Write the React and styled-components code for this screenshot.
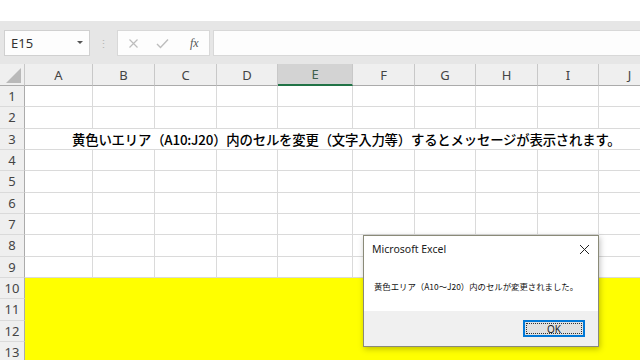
import React from 'react';
import styled, { createGlobalStyle } from 'styled-components';

const GlobalStyle = createGlobalStyle`
  html, body {
    margin: 0;
    padding: 0;
    background: #ffffff;
    overflow: hidden;
  }
  body {
    font-family: "Noto Sans", "Noto Sans CJK JP", sans-serif;
  }
`;

const COLS = [
  { name: 'A', width: 68 },
  { name: 'B', width: 62 },
  { name: 'C', width: 62 },
  { name: 'D', width: 61 },
  { name: 'E', width: 75 },
  { name: 'F', width: 62 },
  { name: 'G', width: 61 },
  { name: 'H', width: 62 },
  { name: 'I', width: 61 },
  { name: 'J', width: 62 },
];

const ROWS = [1, 2, 3, 4, 5, 6, 7, 8, 9, 10, 11, 12, 13];

const Window = styled.div`
  position: relative;
  width: 640px;
  height: 360px;
  overflow: hidden;
  display: flex;
  flex-direction: column;
`;

const TopStrip = styled.div`
  height: 21px;
  background: #ffffff;
  flex-shrink: 0;
`;

const FormulaBar = styled.div`
  height: 26px;
  padding: 9px 0 8px 4px;
  background: #e6e6e6;
  display: flex;
  align-items: stretch;
  flex-shrink: 0;
`;

const NameBox = styled.div`
  width: 86px;
  box-sizing: border-box;
  background: #fdfdfd;
  border: 1px solid #d0d0d0;
  display: flex;
  align-items: center;
  justify-content: space-between;
  padding: 0 6px 0 6px;
  font-size: 13px;
  color: #333;
`;

const DropArrow = styled.span`
  width: 0;
  height: 0;
  border-left: 3px solid transparent;
  border-right: 3px solid transparent;
  border-top: 3px solid #555;
  margin-top: -2px;
`;

const Grip = styled.div`
  width: 27px;
  display: flex;
  align-items: center;
  justify-content: center;
  color: #b5b5b5;
  font-size: 11px;
`;

const FuncBox = styled.div`
  width: 93px;
  box-sizing: border-box;
  background: #fdfdfd;
  border: 1px solid #d8d8d8;
  display: flex;
  align-items: center;
  padding-left: 10px;
  gap: 17px;
`;

const FxLabel = styled.span`
  font-family: "Liberation Serif", serif;
  font-style: italic;
  font-size: 12px;
  color: #555;
  margin-left: 4px;
`;

const FormulaInput = styled.div`
  flex: 1;
  margin-left: 3px;
  background: #fdfdfd;
  border: 1px solid #d8d8d8;
  border-right: none;
`;

const Sheet = styled.div`
  display: grid;
  grid-template-columns: 25px ${COLS.map((c) => `${c.width}px`).join(' ')};
  grid-template-rows: 22px repeat(${ROWS.length}, 21.33px);
  background: #ffffff;
  flex-shrink: 0;
`;

const Corner = styled.div`
  background: #efefef;
  border-right: 1px solid #c8c8c8;
  border-bottom: 1px solid #ababab;
  position: relative;
`;

const ColHeader = styled.div`
  background: ${(p) => (p.$active ? '#d3d3d3' : '#efefef')};
  border-right: 1px solid #c8c8c8;
  border-bottom: ${(p) => (p.$active ? '2px solid #217346' : '1px solid #ababab')};
  display: flex;
  align-items: center;
  justify-content: center;
  font-size: 13px;
  color: ${(p) => (p.$active ? '#3f5e4c' : '#444')};
  box-sizing: border-box;
`;

const RowHeader = styled.div`
  background: #efefef;
  border-right: 1px solid #ababab;
  border-bottom: 1px solid #dadada;
  display: flex;
  align-items: center;
  justify-content: center;
  font-size: 13px;
  color: #444;
  box-sizing: border-box;
`;

const Cell = styled.div`
  background: ${(p) => (p.$fill ? '#ffff00' : '#ffffff')};
  border-right: 1px solid ${(p) => (p.$fill ? '#ffff00' : '#dadada')};
  border-bottom: 1px solid ${(p) => (p.$fill ? '#ffff00' : '#dadada')};
  box-sizing: border-box;
`;

const MergedCell = styled.div`
  grid-column: 2 / -1;
  background: #ffffff;
  border-bottom: 1px solid #dadada;
  box-sizing: border-box;
  display: flex;
  align-items: center;
  padding-left: 47px;
  font-family: "Noto Sans CJK JP", sans-serif;
  font-size: 13.4px;
  font-weight: 500;
  color: #000;
  white-space: nowrap;
  letter-spacing: -0.2px;
`;

const Dialog = styled.div`
  position: absolute;
  left: 363px;
  top: 235px;
  width: 236px;
  height: 112px;
  box-sizing: border-box;
  background: #ffffff;
  border: 1px solid #8a8a78;
  box-shadow: 1px 2px 6px rgba(0, 0, 0, 0.25);
  display: flex;
  flex-direction: column;
`;

const TitleBar = styled.div`
  height: 26px;
  display: flex;
  align-items: center;
  justify-content: space-between;
  padding: 0 8px 0 8px;
  font-size: 10.5px;
  color: #222;
`;

const Message = styled.div`
  flex: 1;
  display: flex;
  align-items: center;
  padding-left: 10px;
  padding-bottom: 2px;
  font-family: "Noto Sans CJK JP", sans-serif;
  font-size: 8.4px;
  color: #111;
  white-space: nowrap;
`;

const Footer = styled.div`
  height: 35px;
  background: #f0f0f0;
  display: flex;
  align-items: center;
  justify-content: flex-end;
  padding-right: 13px;
`;

const OkButton = styled.div`
  width: 62px;
  height: 17px;
  box-sizing: border-box;
  background: #e1e1e1;
  border: 2px solid #0078d7;
  display: flex;
  align-items: center;
  justify-content: center;
  font-size: 10px;
  color: #222;
  position: relative;
  &::after {
    content: '';
    position: absolute;
    inset: 1px;
    border: 1px dotted #333;
  }
`;

const CloseIcon = () => (
  <svg width="11" height="11" viewBox="0 0 11 11">
    <path d="M1 1L10 10M10 1L1 10" stroke="#222" strokeWidth="1" fill="none" />
  </svg>
);

const CrossIcon = () => (
  <svg width="11" height="11" viewBox="0 0 11 11">
    <path d="M1.5 1.5L9.5 9.5M9.5 1.5L1.5 9.5" stroke="#bdbdbd" strokeWidth="1.2" fill="none" />
  </svg>
);

const CheckIcon = () => (
  <svg width="13" height="11" viewBox="0 0 13 11">
    <path d="M1 6L4.5 9.5L12 1.5" stroke="#bdbdbd" strokeWidth="1.4" fill="none" />
  </svg>
);

const SelectAll = () => (
  <svg width="25" height="22" viewBox="0 0 25 22" style={{ position: 'absolute', left: 0, top: 0 }}>
    <polygon points="21,4 21,19 6,19" fill="#b9b9b9" />
  </svg>
);

const App = () => {
  return (
    <Window>
      <GlobalStyle />
      <TopStrip />
      <FormulaBar>
        <NameBox>
          <span>E15</span>
          <DropArrow />
        </NameBox>
        <Grip>⋮</Grip>
        <FuncBox>
          <CrossIcon />
          <CheckIcon />
          <FxLabel>fx</FxLabel>
        </FuncBox>
        <FormulaInput />
      </FormulaBar>
      <Sheet>
        <Corner>
          <SelectAll />
        </Corner>
        {COLS.map((c) => (
          <ColHeader key={c.name} $active={c.name === 'E'}>
            {c.name}
          </ColHeader>
        ))}
        {ROWS.map((r) => (
          <React.Fragment key={r}>
            <RowHeader>{r}</RowHeader>
            {r === 3 ? (
              <MergedCell>
                黄色いエリア（A10:J20）内のセルを変更（文字入力等）するとメッセージが表示されます。
              </MergedCell>
            ) : (
              COLS.map((c) => <Cell key={c.name} $fill={r >= 10} />)
            )}
          </React.Fragment>
        ))}
      </Sheet>
      <Dialog>
        <TitleBar>
          <span>Microsoft Excel</span>
          <CloseIcon />
        </TitleBar>
        <Message>黄色エリア（A10～J20）内のセルが変更されました。</Message>
        <Footer>
          <OkButton>OK</OkButton>
        </Footer>
      </Dialog>
    </Window>
  );
};

export default App;
